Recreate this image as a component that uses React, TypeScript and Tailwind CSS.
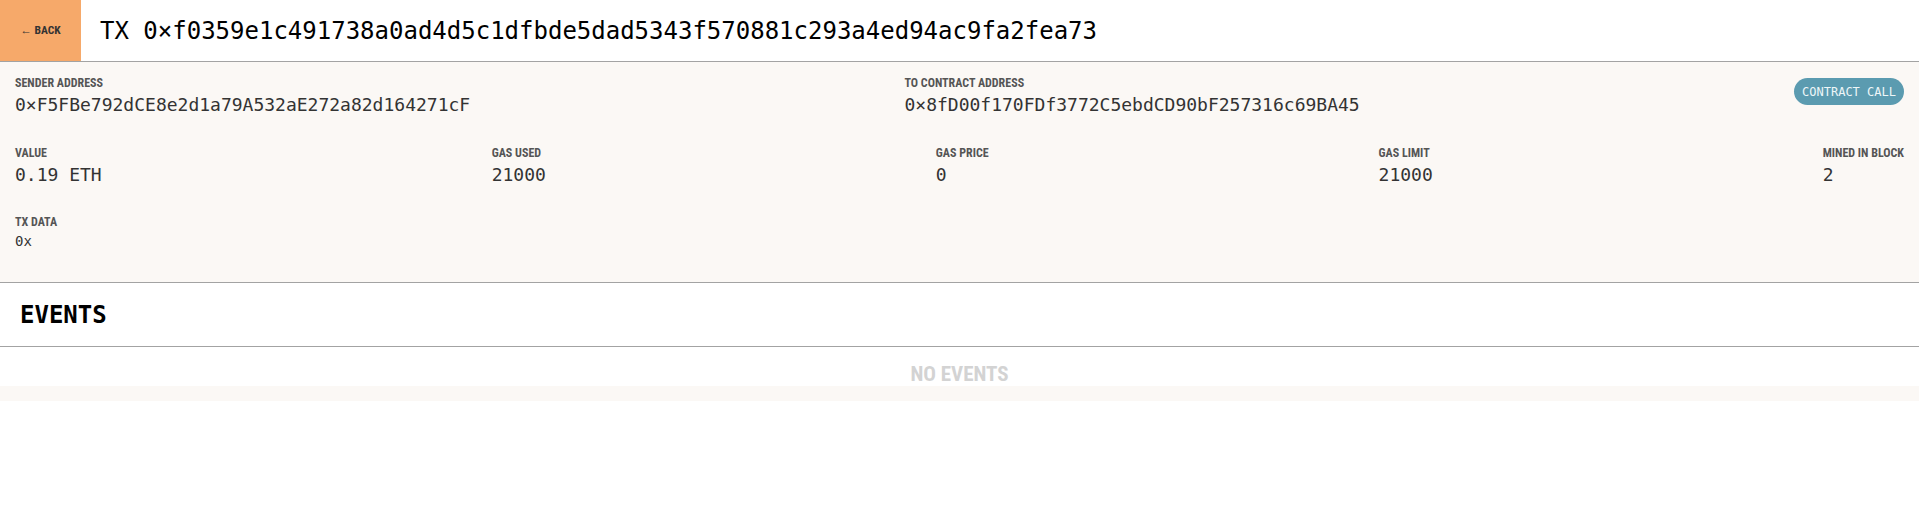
const mono = "font-['DejaVu_Sans_Mono','Liberation_Mono',monospace]";
const cond = "font-['Liberation_Sans_Narrow','Roboto_Condensed',Roboto,sans-serif]";

function Field({ label, value, small }: { label: string; value: string; small?: boolean }) {
  return (
    <div className="flex flex-col">
      <span className={`${cond} text-[12px] leading-[14px] font-bold text-[#555]`}>{label}</span>
      <span
        className={`${mono} text-[#333] ${small ? "mt-[4px] text-[14px] leading-[16px]" : "mt-[4px] text-[18px] leading-[22px]"}`}
      >
        {value}
      </span>
    </div>
  );
}

export default function App() {
  const stats = [
    { label: "VALUE", value: "0.19 ETH" },
    { label: "GAS USED", value: "21000" },
    { label: "GAS PRICE", value: "0" },
    { label: "GAS LIMIT", value: "21000" },
    { label: "MINED IN BLOCK", value: "2" },
  ];

  return (
    <div className="w-full min-h-[531px] bg-white">
      <header className="flex h-[62px] border-b border-[#a3a3a3]">
        <button className="flex w-[81px] items-center justify-center bg-[#f6a96a]">
          <span className={`${cond} text-[11.5px] font-bold text-[#333]`}>← BACK</span>
        </button>
        <h1 className={`${mono} flex items-center pl-[19px] text-[24px] text-black`}>
          TX 0×f0359e1c491738a0ad4d5c1dfbde5dad5343f570881c293a4ed94ac9fa2fea73
        </h1>
      </header>

      <section className="border-b border-[#a3a3a3] bg-[#fbf8f5] px-[15px] pt-[14px] pb-[33px]">
        <div className="flex items-start">
          <div className="flex-1">
            <Field label="SENDER ADDRESS" value="0×F5FBe792dCE8e2d1a79A532aE272a82d164271cF" />
          </div>
          <div className="flex-1">
            <Field label="TO CONTRACT ADDRESS" value="0×8fD00f170FDf3772C5ebdCD90bF257316c69BA45" />
          </div>
          <span
            className={`${mono} mt-[2px] flex h-[27px] w-[110px] items-center justify-center rounded-full bg-[#5b9bb0] text-[12px] text-[#eef6f8]`}
          >
            CONTRACT CALL
          </span>
        </div>

        <div className="mt-[30px] flex justify-between">
          {stats.map((s) => (
            <Field key={s.label} label={s.label} value={s.value} />
          ))}
        </div>

        <div className="mt-[29px]">
          <Field label="TX DATA" value="0x" small />
        </div>
      </section>

      <div className="flex h-[64px] items-center border-b border-[#a3a3a3] px-[20px]">
        <h2 className={`${mono} text-[24px] font-bold text-black`}>EVENTS</h2>
      </div>

      <div className="pt-[15px]">
        <p className={`${cond} text-center text-[21px] leading-[24px] font-bold text-[#d3d3d3]`}>NO EVENTS</p>
      </div>
      <div className="h-[15px] bg-[#fbf8f5]" />
    </div>
  );
}
